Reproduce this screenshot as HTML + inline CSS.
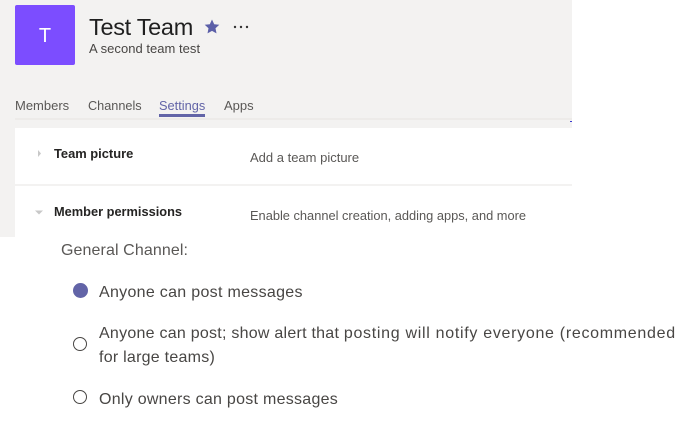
<!DOCTYPE html>
<html><head><meta charset="utf-8">
<style>
html,body{margin:0;padding:0;background:#fff}
#r{position:relative;width:700px;height:421px;overflow:hidden;background:#fff;font-family:"Liberation Sans",sans-serif;filter:blur(.3px)}
#r div{position:absolute;white-space:nowrap}
.t{font-family:"Liberation Sans",sans-serif}
</style></head><body>
<div id="r">
<div style="left:0;top:0;width:572px;height:237px;background:#f3f2f1"></div>
<div style="left:15px;top:5px;width:60px;height:60px;background:#7c4dff;border-radius:2px"></div>
<div class="t" style="left:15px;top:5px;width:60px;height:60px;line-height:62px;text-align:center;color:#fff;font-size:20px">T</div>
<div class="t" style="left:89px;top:12px;font-size:23.5px;line-height:30px;color:#1f1f1f;letter-spacing:-.3px">Test Team</div>
<svg style="position:absolute;left:204px;top:19px" width="16" height="15" viewBox="0 0 16 15"><path d="M8 .5l2.2 4.7 5.1.6-3.8 3.5 1 5.1L8 11.9l-4.5 2.5 1-5.1L.7 5.8l5.1-.6z" fill="#5b5fa8"/></svg>
<svg style="position:absolute;left:233px;top:25px" width="16" height="4" viewBox="0 0 16 4"><circle cx="2" cy="2" r="1.2" fill="#333"/><circle cx="8" cy="2" r="1.2" fill="#333"/><circle cx="14" cy="2" r="1.2" fill="#333"/></svg>
<div class="t" style="left:89px;top:41px;font-size:13px;line-height:16px;color:#484644;letter-spacing:.03px">A second team test</div>
<div class="t" style="left:15px;top:98px;font-size:13px;line-height:16px;color:#5a5856">Members</div>
<div class="t" style="left:88px;top:98px;font-size:12.7px;line-height:16px;color:#5a5856">Channels</div>
<div class="t" style="left:159px;top:98px;font-size:12.8px;line-height:16px;color:#6264a7">Settings</div>
<div class="t" style="left:224px;top:98px;font-size:13px;line-height:16px;color:#5a5856">Apps</div>
<div style="left:15px;top:118px;width:557px;height:2px;background:#edebe9"></div>
<div style="left:159px;top:114px;width:46px;height:3px;background:#6264a7"></div>
<div style="left:570px;top:121px;width:2px;height:1px;background:#3a3ad0"></div>
<div style="left:15px;top:128px;width:557px;height:109px;background:#fff"></div>
<div style="left:15px;top:184px;width:557px;height:2px;background:#f3f2f1"></div>
<svg style="position:absolute;left:37px;top:150px" width="5" height="7" viewBox="0 0 5 7"><path d="M1 0l3 3.5-3 3.5z" fill="#c8c8c8"/></svg>
<svg style="position:absolute;left:35px;top:210px" width="8" height="5" viewBox="0 0 8 5"><path d="M0 .5h8L4 4.5z" fill="#c8c8c8"/></svg>
<div class="t" style="left:54px;top:146px;font-size:12.9px;line-height:16px;font-weight:bold;color:#252423">Team picture</div>
<div class="t" style="left:54px;top:204px;font-size:12.8px;line-height:16px;font-weight:bold;color:#252423">Member permissions</div>
<div class="t" style="left:250px;top:150px;font-size:13px;line-height:16px;color:#5a5856">Add a team picture</div>
<div class="t" style="left:250px;top:208px;font-size:12.83px;line-height:16px;color:#5a5856">Enable channel creation, adding apps, and more</div>
<div class="t" style="left:61px;top:241px;font-size:16px;line-height:20px;color:#5a5856;letter-spacing:.1px">General Channel:</div>
<div style="left:73px;top:283px;width:15px;height:15px;border-radius:50%;background:#6264a7"></div>
<div class="t" style="left:99px;top:283px;font-size:16px;line-height:20px;color:#484644;letter-spacing:.3px">Anyone can post messages</div>
<div style="left:73px;top:337px;width:12px;height:12px;border-radius:50%;border:1.5px solid #484644"></div>
<div class="t" style="left:99px;top:322px;font-size:16px;line-height:24px;color:#484644;letter-spacing:.25px">Anyone can post; show alert that <span style="letter-spacing:.7px">posting will notify everyone (recommended</span><br>for large teams)</div>
<div style="left:73px;top:390px;width:12px;height:12px;border-radius:50%;border:1.5px solid #484644"></div>
<div class="t" style="left:99px;top:390px;font-size:16px;line-height:20px;color:#484644;letter-spacing:.27px">Only owners can post messages</div>
</div>
</body></html>
